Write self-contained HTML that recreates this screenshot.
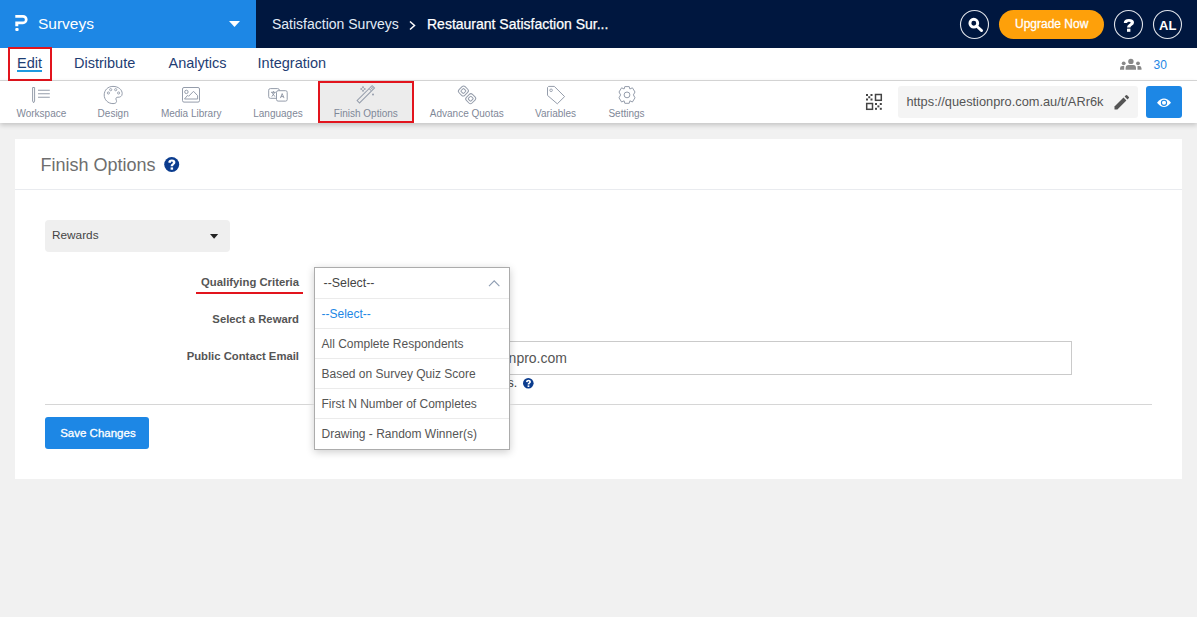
<!DOCTYPE html>
<html><head><meta charset="utf-8">
<style>
*{box-sizing:border-box;margin:0;padding:0}
html,body{width:1197px;height:617px;overflow:hidden;background:#f1f1f1;font-family:"Liberation Sans",sans-serif}
.a{position:absolute;white-space:nowrap;line-height:1}
svg{position:absolute;overflow:visible}
.tab{font-size:14.5px;color:#1e3d73;top:56.4px}
.tl{font-size:10px;color:#7f8898;top:109px;transform:translateX(-50%)}
.lbl{font-size:11.3px;font-weight:bold;color:#555;right:898px}
.it{font-size:12px;color:#555;left:321.5px}
.sep{position:absolute;left:315px;width:194px;height:1px;background:#ebebeb}
</style></head><body>
<!-- top bar -->
<div class="a" style="left:0;top:0;width:1197px;height:48px;background:#00173f"></div>
<div class="a" style="left:0;top:0;width:256px;height:48px;background:#1d87e5"></div>
<svg style="left:0;top:0" width="40" height="40"><path d="M15.3 15 H23 A4.6 4.6 0 0 1 23 24.2 H18.3 V26.2 H15.3 V21.6 H23 A1.9 1.9 0 0 0 23 17.8 H15.3 Z" fill="#fff"/><rect x="15.3" y="28.1" width="3.3" height="2.8" rx="1" fill="#fff"/></svg>
<div class="a" style="left:38px;top:15.8px;font-size:15.5px;color:#fff">Surveys</div>
<svg style="left:229px;top:21px" width="11" height="7"><path d="M0 0 H11 L5.5 6Z" fill="#fff"/></svg>
<div class="a" style="left:272px;top:17.1px;font-size:14px;color:#e3ecf7">Satisfaction Surveys</div>
<svg style="left:408px;top:20px" width="9" height="11"><path d="M2 1.5 L6.5 5.5 L2 9.5" fill="none" stroke="#fff" stroke-width="1.5"/></svg>
<div class="a" style="left:427px;top:17.1px;font-size:14px;color:#fff;-webkit-text-stroke:.25px #fff">Restaurant Satisfaction Sur...</div>
<svg style="left:960px;top:10px" width="29" height="29"><circle cx="14.5" cy="14.5" r="14" fill="none" stroke="#dfe3ea" stroke-width="1.1"/></svg>
<svg style="left:960px;top:10px" width="29" height="29"><circle cx="13.8" cy="13.2" r="3.9" fill="none" stroke="#fff" stroke-width="2.9"/><path d="M16.8 16.2 L21.6 20.6" stroke="#fff" stroke-width="2.8" stroke-linecap="round"/></svg>
<div class="a" style="left:999px;top:10px;width:105px;height:29px;border-radius:14.5px;background:#fea00a"></div>
<div class="a" style="left:1015px;top:17.7px;font-size:12px;color:#fff;-webkit-text-stroke:.3px #fff">Upgrade Now</div>
<svg style="left:1114px;top:10px" width="29" height="29"><circle cx="14.5" cy="14.5" r="14" fill="none" stroke="#dfe3ea" stroke-width="1.1"/></svg>
<svg style="left:1114px;top:10px" width="29" height="29"><path d="M9.8 13 Q9.8 9 14.9 9 Q20 9 20 12.6 Q20 14.6 18 15.6 Q16.4 16.4 16.4 17.6 L13 17.6 Q13 15.4 15 14.3 Q16.7 13.4 16.7 12.6 Q16.7 11.7 14.9 11.7 Q13.3 11.7 13.1 13 Z" fill="#fff"/><rect x="13" y="18.7" width="3.4" height="3.1" fill="#fff"/></svg>
<svg style="left:1153px;top:10px" width="29" height="29"><circle cx="14.5" cy="14.5" r="14" fill="none" stroke="#dfe3ea" stroke-width="1.1"/></svg>
<div class="a" style="left:1159px;top:19px;font-size:13px;font-weight:bold;color:#fff">AL</div>

<!-- nav row -->
<div class="a" style="left:0;top:48px;width:1197px;height:33px;background:#fff;border-bottom:1px solid #dadada"></div>
<div class="a tab" style="left:17px">Edit</div>
<div class="a tab" style="left:74px">Distribute</div>
<div class="a tab" style="left:168.5px">Analytics</div>
<div class="a tab" style="left:257.6px">Integration</div>
<div class="a" style="left:17px;top:70px;width:25px;height:2px;background:#1d9ae0"></div>
<div class="a" style="left:8px;top:47px;width:44px;height:34px;border:2px solid #e2141d"></div>
<svg style="left:1119px;top:57px" width="24" height="14"><circle cx="11.9" cy="4.4" r="2.7" fill="#888"/><path d="M6.6 12.8 V11 Q6.6 8.1 9.6 8.1 H14.2 Q17 8.1 17 11 V12.8Z" fill="#888"/><circle cx="4.7" cy="6.3" r="1.9" fill="#888"/><path d="M1 12.8 V11.4 Q1 9.1 3.3 9.1 H5.2 V12.8Z" fill="#888"/><circle cx="19" cy="6.3" r="1.9" fill="#888"/><path d="M22.5 12.8 V11.4 Q22.5 9.1 20.2 9.1 H18.5 V12.8Z" fill="#888"/></svg>
<div class="a" style="left:1153.6px;top:59.2px;font-size:12px;color:#1d87e5">30</div>

<!-- toolbar -->
<div class="a" style="left:0;top:81px;width:1197px;height:42px;background:#fff;box-shadow:0 2px 5px rgba(0,0,0,.2)"></div>
<div class="a" style="left:318px;top:81px;width:96px;height:42px;background:#ececec;border:2px solid #e2141d"></div>
<!-- workspace icon -->
<svg style="left:0;top:0" width="60" height="110"><path d="M32.6 87.5 H34.6 V101 L33.6 102.8 L32.6 101Z" fill="none" stroke="#959dab" stroke-width="1"/><path d="M38 90.3 H49.8 M38 93.8 H49.8 M38 97.3 H49.8" stroke="#959dab" stroke-width="1.1"/></svg>
<!-- design palette -->
<svg style="left:0;top:0" width="140" height="110"><path d="M113 86.4 C118.5 86.4 122.2 89.8 122.2 93.6 C122.2 96.6 119.6 97.4 118 97.2 C116.2 97 115.4 98.4 116.2 100 C117.2 102 116 103.6 113 103.6 C107.8 103.6 104.2 99.6 104.2 95 C104.2 90.2 107.8 86.4 113 86.4Z" fill="none" stroke="#959dab" stroke-width="1"/><circle cx="108.4" cy="93" r="1.1" fill="none" stroke="#959dab" stroke-width=".9"/><circle cx="110.7" cy="89.7" r="1.1" fill="none" stroke="#959dab" stroke-width=".9"/><circle cx="115.7" cy="89.7" r="1.1" fill="none" stroke="#959dab" stroke-width=".9"/><circle cx="118.6" cy="93" r="1.1" fill="none" stroke="#959dab" stroke-width=".9"/></svg>
<!-- media -->
<svg style="left:0;top:0" width="220" height="110"><rect x="182.5" y="87.5" width="17" height="14.6" rx="1.5" fill="none" stroke="#959dab" stroke-width="1"/><circle cx="186.4" cy="91.9" r="1.7" fill="none" stroke="#959dab" stroke-width="1"/><path d="M184.5 99 L187.6 95.3 L188.6 96.3 L193.5 91.3 L197.6 95.6 V99 Z" fill="none" stroke="#959dab" stroke-width="1" stroke-linejoin="round"/></svg>
<!-- languages -->
<svg style="left:0;top:0" width="300" height="110"><rect x="268.7" y="88.6" width="10.6" height="9.7" rx="1.6" fill="none" stroke="#959dab" stroke-width="1"/><rect x="276.5" y="90.7" width="10.7" height="10.4" rx="1.6" fill="#fff" stroke="#959dab" stroke-width="1"/><path d="M271 92.3 H275.8 M273.4 91 V92.3 M271.9 92.3 L274.9 96.6 M274.9 92.3 L271.8 96.6" stroke="#858e9d" stroke-width=".85" fill="none"/><path d="M280.4 98.1 L282.2 93.6 L284 98.1 M281 96.6 H283.4" stroke="#858e9d" stroke-width=".85" fill="none"/></svg>
<!-- wand -->
<svg style="left:0;top:0" width="400" height="110"><g transform="translate(365.8 94.3) rotate(45)" fill="none" stroke="#959dab" stroke-width="1"><rect x="-1.7" y="-10.6" width="3.4" height="21.2"/><path d="M-1.7 -6.2 H1.7 M-1.7 -8.4 H1.7 M0 -10.6 V-6.2" stroke-width=".7"/></g><path d="M363 86.3 Q363.3 88.7 365.6 89 Q363.3 89.3 363 91.7 Q362.7 89.3 360.4 89 Q362.7 88.7 363 86.3Z" fill="none" stroke="#959dab" stroke-width=".8"/><circle cx="373" cy="94.5" r="1" fill="#959dab"/></svg>
<!-- chain -->
<svg style="left:0;top:0" width="500" height="110"><g fill="none" stroke="#959dab" stroke-width="1"><g transform="translate(463.4 91) rotate(45)"><rect x="-4" y="-4.3" width="8" height="8.6" rx="2.2"/><rect x="-1.9" y="-2" width="3.8" height="4" rx=".8"/></g><g transform="translate(470.7 98.7) rotate(45)"><rect x="-4" y="-4.3" width="8" height="8.6" rx="2.2"/><rect x="-1.9" y="-2" width="3.8" height="4" rx=".8"/></g></g></svg>
<!-- tag -->
<svg style="left:0;top:0" width="600" height="110"><path d="M548.6 86.4 H554.3 L564.6 96.6 L557.3 103.8 L547.5 95.4 V87.5Z" fill="none" stroke="#959dab" stroke-width="1" stroke-linejoin="round"/><circle cx="551.1" cy="90.3" r="1.3" fill="none" stroke="#959dab" stroke-width=".9"/></svg>
<!-- gear -->
<svg style="left:0;top:0" width="660" height="110"><path id="g" d="M624.8 86.6 H629.2 L629.9 89 L632.4 87.8 L635 92 L633.4 94.9 L635 97.8 L632.4 102 L629.9 100.8 L629.2 103.3 H624.8 L624.1 100.8 L621.6 102 L619 97.8 L620.6 94.9 L619 92 L621.6 87.8 L624.1 89Z" fill="none" stroke="#959dab" stroke-width="1" stroke-linejoin="round"/><circle cx="627" cy="94.9" r="2.9" fill="none" stroke="#959dab" stroke-width="1"/></svg>
<div class="a tl" style="left:41.4px">Workspace</div>
<div class="a tl" style="left:113.2px">Design</div>
<div class="a tl" style="left:191.2px">Media Library</div>
<div class="a tl" style="left:278px">Languages</div>
<div class="a tl" style="left:365.8px">Finish Options</div>
<div class="a tl" style="left:466.8px">Advance Quotas</div>
<div class="a tl" style="left:555.6px">Variables</div>
<div class="a tl" style="left:626.5px">Settings</div>
<!-- qr -->
<svg style="left:866px;top:94px" width="16" height="16" fill="#444"><rect x="0" y="0" width="2" height="2"/><rect x="4.5" y="0" width="2" height="2"/><rect x="2.25" y="2.25" width="2" height="2"/><rect x="0" y="4.5" width="2" height="2"/><rect x="4.5" y="4.5" width="2" height="2"/><rect x="9.5" y="0.5" width="5.8" height="5.8" fill="none" stroke="#444" stroke-width="1.5"/><rect x="0.7" y="9.5" width="5.8" height="5.8" fill="none" stroke="#444" stroke-width="1.5"/><rect x="9" y="9" width="2" height="2"/><rect x="13.8" y="9" width="2" height="2"/><rect x="11.4" y="11.4" width="2" height="2"/><rect x="9" y="13.8" width="2" height="2"/><rect x="13.8" y="13.8" width="2" height="2"/></svg>
<div class="a" style="left:898px;top:86px;width:240px;height:32px;background:#f4f4f4;border-radius:3px"></div>
<div class="a" style="left:906.4px;top:96.1px;font-size:12.8px;color:#555">https://questionpro.com.au/t/ARr6k</div>
<svg style="left:1113px;top:94px" width="18" height="17"><path d="M1.5 12.6 L10.5 3.6 L13.4 6.5 L4.4 15.5 H1.5Z" fill="#555"/><path d="M11.6 2.5 L12.9 1.2 Q13.5 .6 14.1 1.2 L15.8 2.9 Q16.4 3.5 15.8 4.1 L14.5 5.4Z" fill="#555"/></svg>
<div class="a" style="left:1146px;top:86px;width:36px;height:32px;background:#1d87e5;border-radius:3px"></div>
<svg style="left:1146px;top:86px" width="36" height="32"><path d="M11 16.8 Q14.5 12.6 18 12.6 Q21.5 12.6 25 16.8 Q21.5 21 18 21 Q14.5 21 11 16.8Z" fill="#fff"/><circle cx="18" cy="16.8" r="2.6" fill="none" stroke="#1d87e5" stroke-width="1.1"/></svg>

<!-- card -->
<div class="a" style="left:15px;top:139px;width:1167px;height:340px;background:#fff"></div>
<div class="a" style="left:40.5px;top:155.7px;font-size:18px;color:#6e6e6e">Finish Options</div>
<svg style="left:164px;top:157px" width="16" height="16"><circle cx="7.7" cy="7.5" r="7.5" fill="#0b3c8e"/><path d="M4.2 5.6 Q4.4 2.4 7.9 2.4 Q11.4 2.4 11.4 5.3 Q11.4 6.9 9.9 7.7 Q9.1 8.2 9.1 9.3 L6.6 9.3 Q6.6 7.6 8 6.8 Q8.9 6.3 8.9 5.5 Q8.9 4.6 7.9 4.6 Q6.8 4.6 6.6 5.9 Z" fill="#fff"/><rect x="6.6" y="10.4" width="2.5" height="2.3" fill="#fff"/></svg>
<div class="a" style="left:15px;top:189px;width:1167px;height:1px;background:#e9ebef"></div>
<div class="a" style="left:45px;top:220px;width:185px;height:32px;background:#efefef;border-radius:4px"></div>
<div class="a" style="left:52px;top:229.8px;font-size:11.8px;color:#444">Rewards</div>
<svg style="left:210px;top:233.5px" width="9" height="5"><path d="M0 0 H8.2 L4.1 4.8Z" fill="#222"/></svg>

<div class="a lbl" style="top:277.4px">Qualifying Criteria</div>
<div class="a" style="left:195.5px;top:292px;width:107.5px;height:2px;background:#e2141d"></div>
<div class="a lbl" style="top:314.3px">Select a Reward</div>
<div class="a lbl" style="top:351.4px">Public Contact Email</div>

<!-- email input -->
<div class="a" style="left:500px;top:341px;width:572px;height:34px;background:#fff;border:1px solid #cacaca"></div>
<div class="a" style="left:508.6px;top:350.8px;font-size:14px;color:#555">npro.com</div>
<div class="a" style="left:507.5px;top:377.1px;font-size:12.5px;color:#444">s.</div>
<svg style="left:523.3px;top:378.4px" width="10.6" height="10.6" viewBox="0 0 15 15"><circle cx="7.5" cy="7.5" r="7.5" fill="#0b3c8e"/><path d="M4.1 5.6 Q4.3 2.4 7.8 2.4 Q11.3 2.4 11.3 5.3 Q11.3 6.9 9.8 7.7 Q9 8.2 9 9.3 L6.5 9.3 Q6.5 7.6 7.9 6.8 Q8.8 6.3 8.8 5.5 Q8.8 4.6 7.8 4.6 Q6.7 4.6 6.5 5.9 Z" fill="#fff"/><rect x="6.5" y="10.4" width="2.5" height="2.3" fill="#fff"/></svg>

<!-- dropdown -->
<div class="a" style="left:314px;top:267px;width:196px;height:183px;background:#fff;border:1px solid #acacac;box-shadow:0 2px 8px rgba(0,0,0,.2)"></div>
<div class="a" style="left:323.5px;top:276.8px;font-size:12.4px;color:#444">--Select--</div>
<svg style="left:488px;top:279px" width="14" height="9"><path d="M1 7.2 L6.2 1.8 L11.4 7.2" fill="none" stroke="#8e9db2" stroke-width="1.1"/></svg>
<div class="sep" style="top:298px"></div>
<div class="a it" style="top:307.6px;color:#1d87e5">--Select--</div>
<div class="sep" style="top:328px"></div>
<div class="a it" style="top:337.8px">All Complete Respondents</div>
<div class="sep" style="top:358px"></div>
<div class="a it" style="top:368.2px">Based on Survey Quiz Score</div>
<div class="sep" style="top:388px"></div>
<div class="a it" style="top:397.8px">First N Number of Completes</div>
<div class="sep" style="top:418px"></div>
<div class="a it" style="top:427.6px">Drawing - Random Winner(s)</div>

<div class="a" style="left:45px;top:404px;width:269px;height:1px;background:#d6d6d6"></div>
<div class="a" style="left:510px;top:404px;width:642px;height:1px;background:#d6d6d6"></div>
<div class="a" style="left:45px;top:417px;width:104px;height:32px;background:#1d87e5;border-radius:3px"></div>
<div class="a" style="left:60.2px;top:427.9px;font-size:11.5px;color:#fff;-webkit-text-stroke:.3px #fff">Save Changes</div>
</body></html>
